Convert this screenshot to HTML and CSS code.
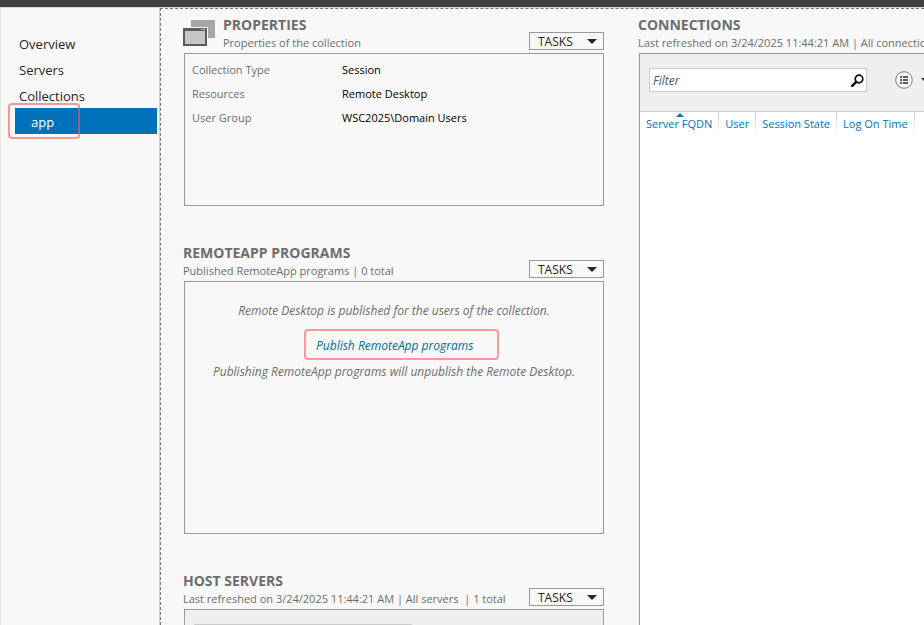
FILE: index.html
```html
<!DOCTYPE html>
<html lang="en">
<head>
<meta charset="utf-8">
<meta name="viewport" content="width=device-width, initial-scale=1">
<title>Server Manager</title>
<link rel="stylesheet" href="styles.css">
</head>
<body>
<div class="window">
  <div class="titlebar"></div>
  <div class="shell">
    <nav class="sidebar" aria-label="Remote Desktop Services">
      <a class="nav-item" href="#overview">Overview</a>
      <a class="nav-item" href="#servers">Servers</a>
      <a class="nav-item" href="#collections">Collections</a>
      <a class="nav-item nav-child" href="#app" aria-current="page">app</a>
    </nav>
    <main class="content">
      <div class="column">
        <section class="tile">
          <header class="tile-header">
            <svg class="tile-icon" viewBox="0 0 32 27" aria-hidden="true">
              <rect x="8" y="0" width="24" height="18" fill="#a6a6a6"/>
              <rect x="0" y="7" width="25" height="20" fill="#f8f8f8"/>
              <rect x="0" y="8" width="24" height="18" fill="#5c5c5c"/>
              <rect x="2" y="11" width="20" height="13" fill="#c6c6c6"/>
              <path d="M18 9h1v1h-1zM20 9h2v1h-2z" fill="#ddd"/>
            </svg>
            <div class="tile-titles">
              <h2>PROPERTIES</h2>
              <p>Properties of the collection</p>
            </div>
            <button class="tasks" type="button" aria-haspopup="menu">TASKS
              <svg class="caret" viewBox="0 0 10 5" aria-hidden="true"><path d="M0 0h10L5 5z"/></svg>
            </button>
          </header>
          <div class="panel panel-short">
            <dl class="props">
              <dt>Collection Type</dt><dd>Session</dd>
              <dt>Resources</dt><dd>Remote Desktop</dd>
              <dt>User Group</dt><dd>WSC2025\Domain Users</dd>
            </dl>
          </div>
        </section>
        <section class="tile">
          <header class="tile-header">
            <div class="tile-titles">
              <h2>REMOTEAPP PROGRAMS</h2>
              <p>Published RemoteApp programs | 0 total</p>
            </div>
            <button class="tasks" type="button" aria-haspopup="menu">TASKS
              <svg class="caret" viewBox="0 0 10 5" aria-hidden="true"><path d="M0 0h10L5 5z"/></svg>
            </button>
          </header>
          <div class="panel panel-tall empty">
            <p>Remote Desktop is published for the users of the collection.</p>
            <a class="publish" href="#publish">Publish RemoteApp programs</a>
            <p>Publishing RemoteApp programs will unpublish the Remote Desktop.</p>
          </div>
        </section>
        <section class="tile">
          <header class="tile-header">
            <div class="tile-titles">
              <h2>HOST SERVERS</h2>
              <p>Last refreshed on 3/24/2025 11:44:21 AM | All servers&nbsp; | 1 total</p>
            </div>
            <button class="tasks" type="button" aria-haspopup="menu">TASKS
              <svg class="caret" viewBox="0 0 10 5" aria-hidden="true"><path d="M0 0h10L5 5z"/></svg>
            </button>
          </header>
          <div class="panel panel-tall">
            <div class="toolbar">
              <div class="filter"><input type="text" aria-label="Filter host servers"></div>
            </div>
          </div>
        </section>
      </div>
      <section class="column connections">
        <header class="tile-header">
          <div class="tile-titles">
            <h2>CONNECTIONS</h2>
            <p>Last refreshed on 3/24/2025 11:44:21 AM | All connections</p>
          </div>
        </header>
        <div class="panel panel-fill">
          <div class="toolbar">
            <div class="filter">
              <input type="text" placeholder="Filter" aria-label="Filter connections">
              <svg class="search" viewBox="0 0 13 13" aria-hidden="true">
                <circle cx="8" cy="5" r="3.8" fill="none" stroke="#111" stroke-width="1.7"/>
                <path d="M5.2 7.8L1.2 11.8" stroke="#111" stroke-width="2.4" stroke-linecap="round"/>
              </svg>
            </div>
            <button class="view" type="button" aria-label="View options">
              <svg class="view-icon" viewBox="0 0 18 18" aria-hidden="true">
                <circle cx="9" cy="9" r="8.3" fill="#f8f8f8" stroke="#777" stroke-width="1"/>
                <path d="M5 5h2v2H5zM8 5h5v2H8zM5 8h2v2H5zM8 8h5v2H8zM5 11h2v2H5zM8 11h5v2H8z" fill="#5a5a5a"/>
              </svg>
              <svg class="caret" viewBox="0 0 10 5" aria-hidden="true"><path d="M0 0h10L5 5z"/></svg>
            </button>
          </div>
          <table class="grid">
            <thead>
              <tr>
                <th class="sorted" scope="col" aria-sort="ascending">Server FQDN</th>
                <th scope="col">User</th>
                <th scope="col">Session State</th>
                <th scope="col">Log On Time</th>
              </tr>
            </thead>
          </table>
        </div>
      </section>
    </main>
  </div>
</div>
</body>
</html>
```
FILE: styles.css
```css
*, *::before, *::after { box-sizing: border-box; }

body {
  margin: 0;
  background: #f8f8f8;
  color: #6d6d6d;
  font: 12px/18px "Open Sans", "Noto Sans", sans-serif;
}

h2, p, dl, dd { margin: 0; }

a { text-decoration: none; }

button, input { font: inherit; }

.window {
  display: flex;
  flex-direction: column;
  height: 100vh;
  overflow: hidden;
}

.titlebar {
  flex: none;
  height: 8px;
  background: #404040;
  border-bottom: 1px solid #d8d8d8;
}

.shell {
  display: flex;
  flex: 1;
  min-height: 0;
}

.sidebar {
  flex: none;
  width: 160px;
  padding: 22px 2px 0 14px;
  border-left: 1px solid #e6e6e6;
  border-right: 1px solid #d0d0d0;
}

.nav-item {
  display: block;
  padding: 2px 0 0 4px;
  color: #262626;
  font-size: 13px;
  line-height: 24px;
}

.nav-child {
  position: relative;
  padding-left: 16px;
  background: #0072bc;
  color: #fff;
}

.nav-child::after {
  content: "";
  position: absolute;
  top: -5px;
  left: -7px;
  width: 72px;
  height: 36px;
  border: 2px solid rgba(250, 90, 90, .62);
  border-radius: 4px;
}

.content {
  display: grid;
  flex: 1;
  grid-template-columns: 421px minmax(0, 1fr);
  gap: 34px;
  min-width: 0;
  padding: 6px 0 0 22px;
  overflow: hidden;
  border-top: 1px dashed #777;
  border-left: 1px dashed #777;
}

.column { min-width: 0; }

.tile { margin-bottom: 37px; }

.tile-header {
  display: flex;
  align-items: flex-end;
  height: 38px;
}

.tile-icon {
  align-self: flex-start;
  width: 32px;
  height: 27px;
  margin: 5px 8px 0 0;
}

.tile-titles {
  flex: 1;
  align-self: flex-start;
  white-space: nowrap;
}

.tile-titles h2 {
  font-size: 14px;
  font-weight: 700;
  line-height: 19px;
}

.tile-titles p { font-size: 11px; }

.tasks {
  display: flex;
  flex: none;
  align-items: center;
  justify-content: space-between;
  width: 75px;
  height: 18px;
  margin-bottom: 3px;
  padding: 1px 6px 0 8px;
  background: #f8f8f8;
  border: 1px solid #999;
  color: #262626;
}

.caret {
  width: 10px;
  height: 5px;
  fill: #262626;
}

.panel {
  margin-left: 1px;
  border: 1px solid #999;
}

.panel-short { min-height: 153px; }

.panel-tall { min-height: 253px; }

.props {
  display: grid;
  grid-template-columns: 150px 1fr;
  padding: 4px 7px;
  font-size: 11px;
  line-height: 24px;
}

.props dd { color: #000; }

.empty {
  display: flex;
  flex-direction: column;
  align-items: center;
  padding-top: 20px;
  font-style: italic;
}

.publish {
  width: 195px;
  margin: 9px 0 3px 15px;
  padding: 6px 10px 4px;
  border: 2px solid #f99;
  border-radius: 4px;
  line-height: 17px;
  color: #006d94;
}

.connections {
  display: flex;
  flex-direction: column;
}

.panel-fill {
  flex: 1;
  background: #fff;
  border-right: 0;
}

.toolbar {
  display: flex;
  align-items: center;
  gap: 28px;
  height: 58px;
  padding: 0 9px;
  overflow: hidden;
  background: #efefef;
  border-bottom: 1px solid #ccc;
}

.filter {
  display: flex;
  align-items: center;
  flex: none;
  width: 218px;
  height: 24px;
  margin-top: -5px;
  padding-right: 2px;
  background: #fff;
  border: 1px solid #ccc;
}

.filter input {
  flex: 1;
  min-width: 0;
  padding: 2px 3px 0;
  background: transparent;
  border: 0;
}

.filter input::placeholder {
  color: #555;
  font-style: italic;
  opacity: 1;
}

.search {
  width: 13px;
  height: 13px;
}

.view {
  display: flex;
  align-items: center;
  flex: none;
  gap: 8px;
  margin-top: -5px;
  padding: 0;
  background: none;
  border: 0;
}

.view-icon {
  width: 18px;
  height: 18px;
}

.grid { border-collapse: collapse; }

.grid th {
  position: relative;
  height: 23px;
  padding: 1px 7px 0 6px;
  background: linear-gradient(#ccc, #fff) right / 1px 100% no-repeat;
  color: #0072bc;
  font-size: 11px;
  font-weight: 400;
  white-space: nowrap;
}

.sorted::before {
  content: "";
  position: absolute;
  top: 1px;
  left: 50%;
  margin-left: -4px;
  border: 4px solid transparent;
  border-top: 0;
  border-bottom-color: #0072bc;
}
```
